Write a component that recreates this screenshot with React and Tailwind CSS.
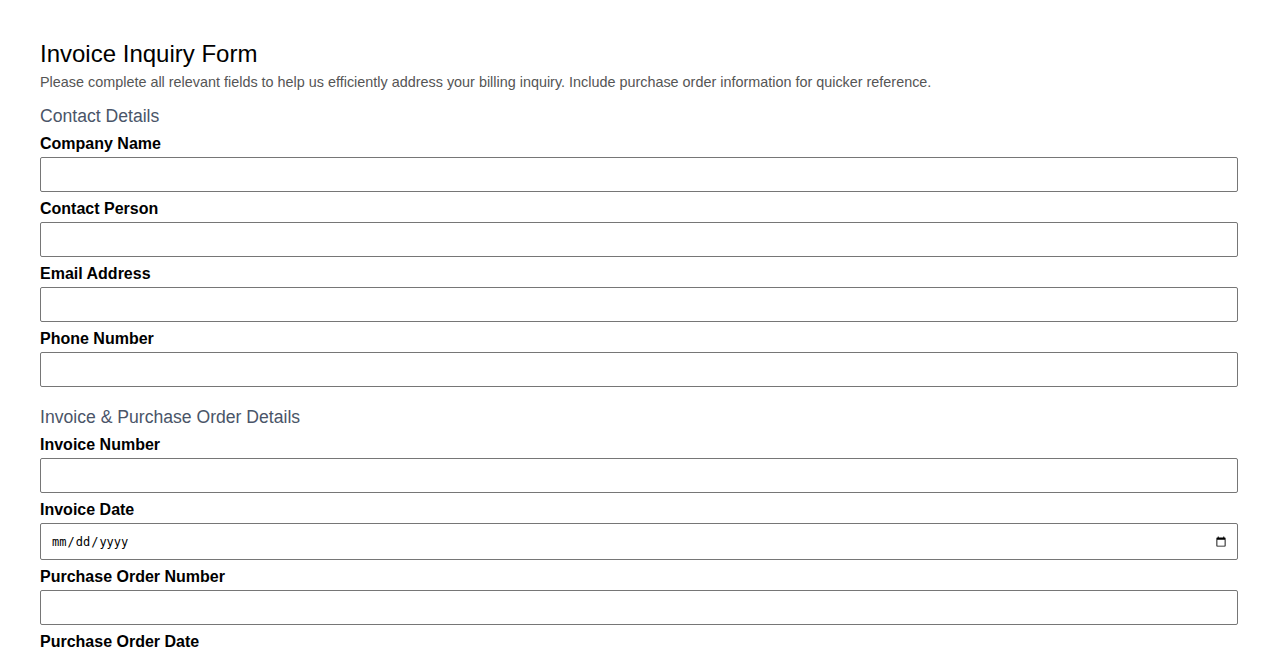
import React from "react";

function Field({ label, type = "text" }) {
  const isDate = type === "date";
  return (
    <div className="mb-[8px]">
      <label className="block mb-[4px] text-[16px] font-bold leading-[18px] text-black">{label}</label>
      {isDate ? (
        <input
          type="date"
          className="block w-full h-[37px] pl-[10px] pr-[8px] border border-[#767676] rounded-[2px] bg-white text-[12px] text-black"
          style={{ fontFamily: '"DejaVu Sans Mono", monospace' }}
        />
      ) : (
        <input
          type={type}
          className="block w-full h-[35px] px-[8px] border border-[#767676] rounded-[2px] bg-white text-[14px]"
        />
      )}
    </div>
  );
}

export default function App() {
  return (
    <div className="bg-white min-h-screen p-10 text-black" style={{ fontFamily: '"Liberation Sans", Arial, sans-serif' }}>
      <h1 className="text-[24px] leading-[28px] font-normal text-black">Invoice Inquiry Form</h1>
      <p className="mt-[6px] text-[14.4px] leading-[16px] text-[#555555]">
        Please complete all relevant fields to help us efficiently address your billing inquiry. Include purchase order information for quicker reference.
      </p>

      <h2 className="mt-[16px] mb-[9px] text-[17.6px] leading-[20px] font-normal text-[#4a5568]">Contact Details</h2>
      <Field label="Company Name" />
      <Field label="Contact Person" />
      <Field label="Email Address" type="email" />
      <Field label="Phone Number" type="tel" />

      <h2 className="mt-[20px] mb-[9px] text-[17.6px] leading-[20px] font-normal text-[#4a5568]">Invoice &amp; Purchase Order Details</h2>
      <Field label="Invoice Number" />
      <Field label="Invoice Date" type="date" />
      <Field label="Purchase Order Number" />
      <Field label="Purchase Order Date" type="date" />
    </div>
  );
}
